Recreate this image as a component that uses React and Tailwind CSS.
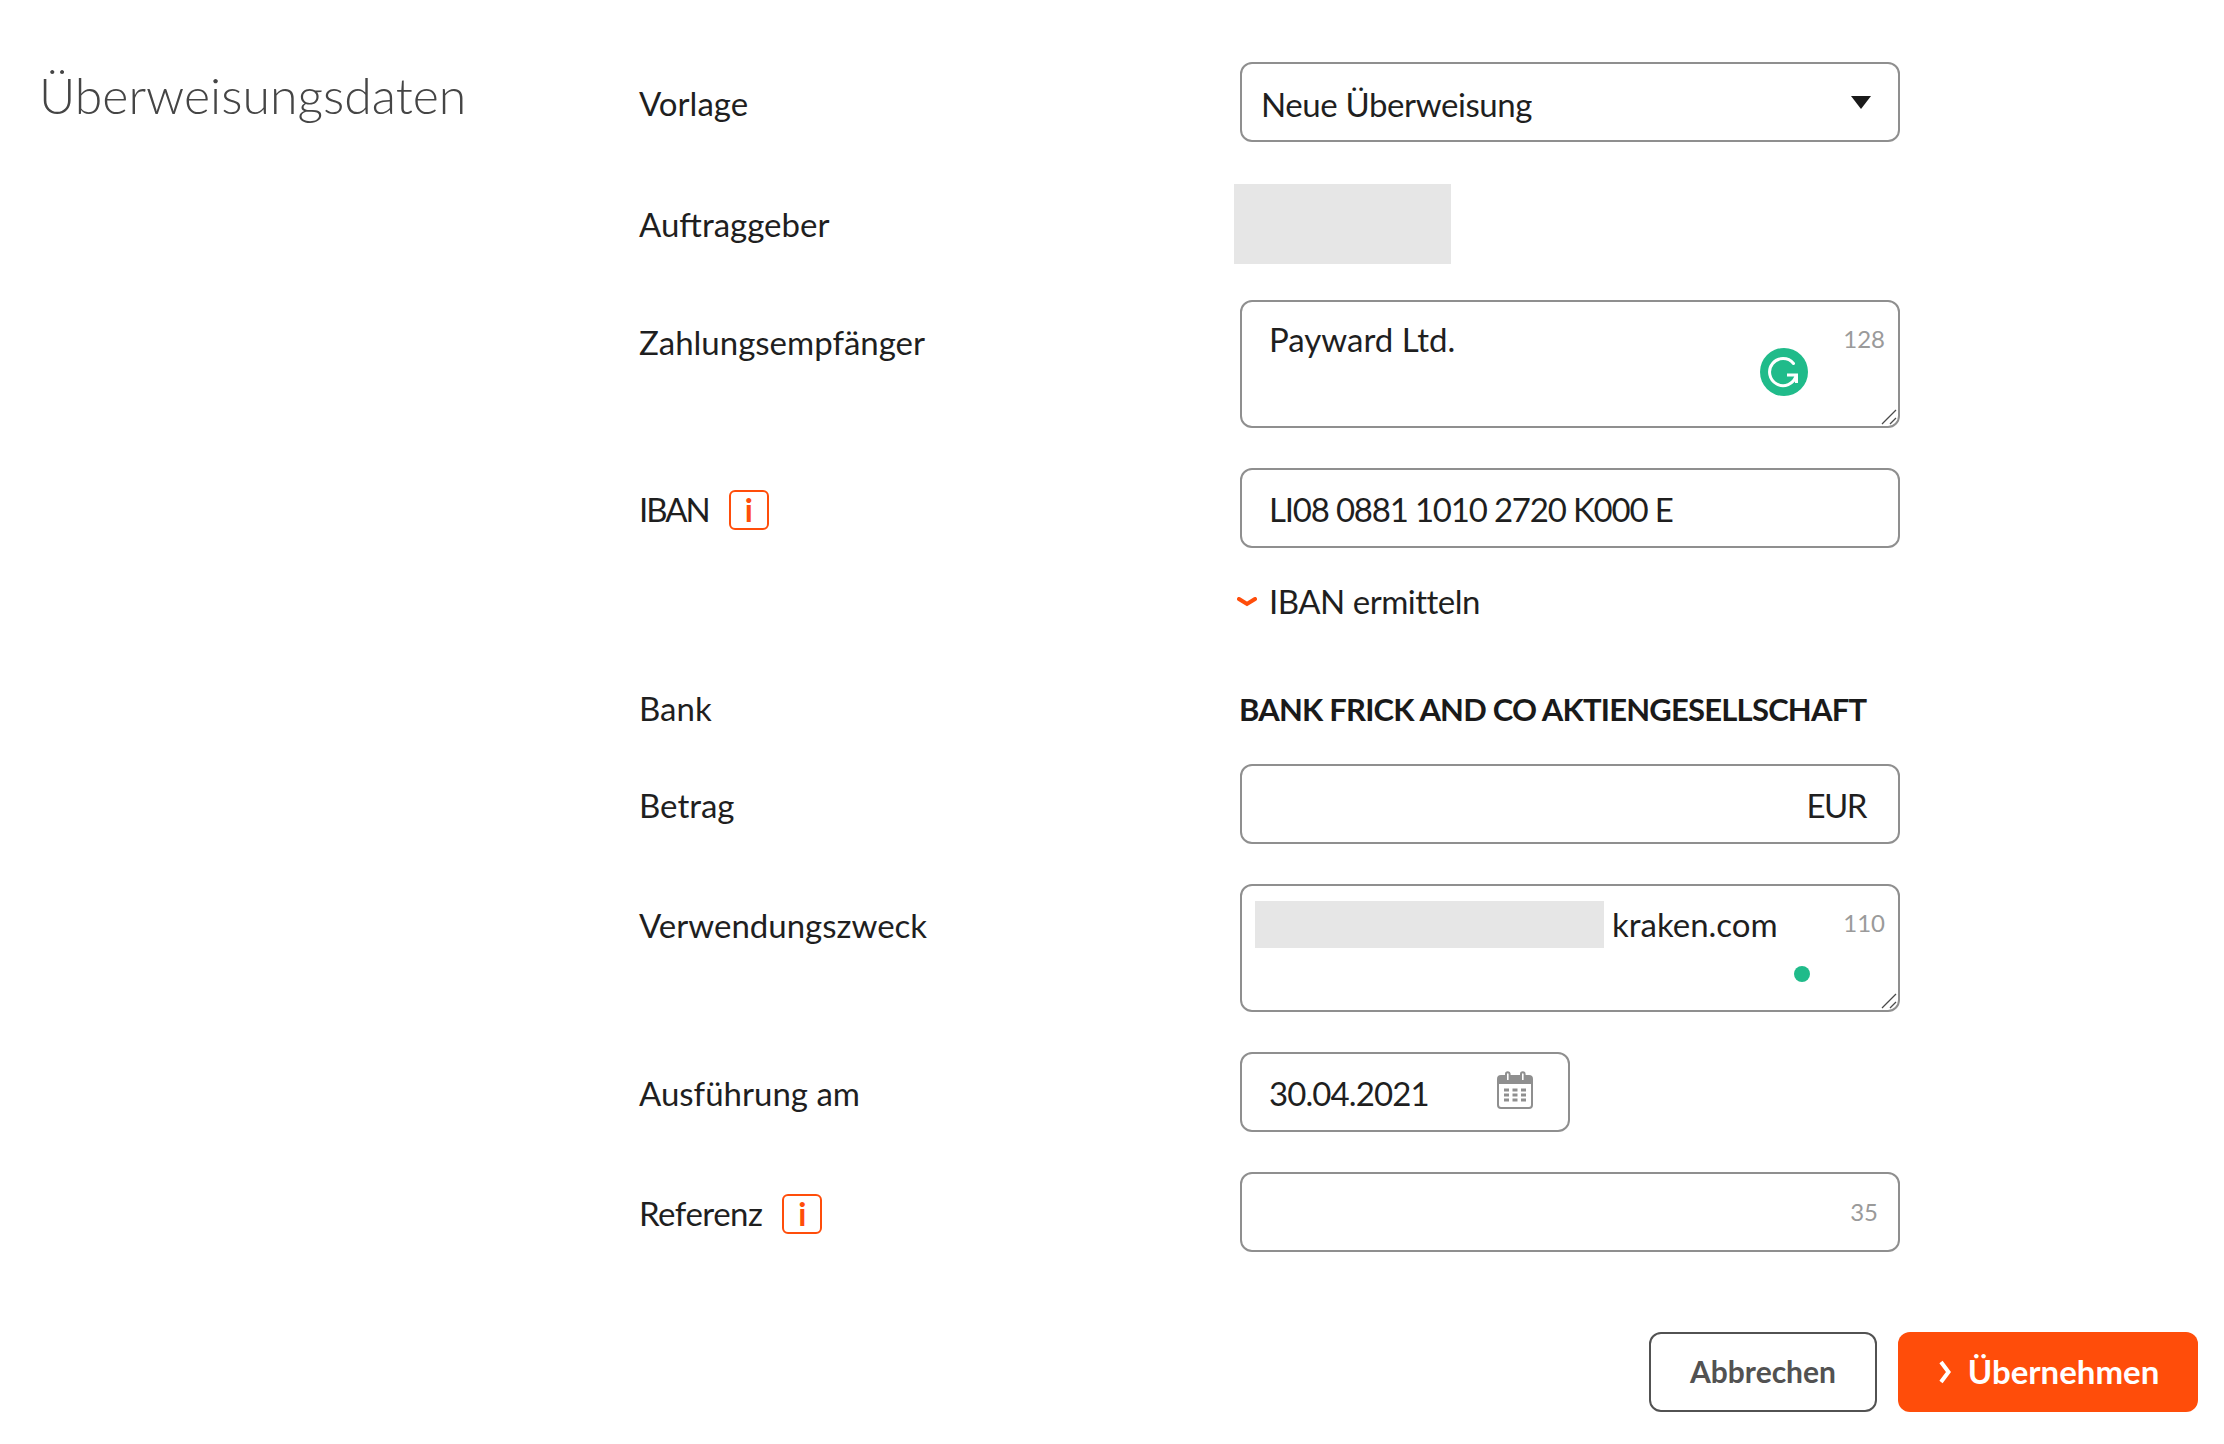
import React from "react";

const box = "border-2 border-[#8f8f8f] rounded-[12px] bg-white w-[660px]";

function Label({ children, info, top = "pt-[3px]", ink = "" }) {
  return (
    <div className={"w-[601px] shrink-0 h-[80px] flex items-center text-[33px] text-[#1f1f1f] " + top}>
      <span className={ink}>{children}</span>
      {info && (
        <span className="ml-[20px] w-[40px] h-[40px] border-2 border-[#ff4d0a] rounded-[6px] flex items-center justify-center text-[#ff4d0a] text-[32px] font-bold leading-none">
          i
        </span>
      )}
    </div>
  );
}

function Handle() {
  return (
    <svg className="absolute right-[1px] bottom-[1px]" width="16" height="16" viewBox="0 0 16 16" fill="none" stroke="#4a4a4a" strokeWidth="1.3">
      <path d="M1 15L15 1M9 15L15 9" />
    </svg>
  );
}

function Count({ children, className }) {
  return <span className={"absolute text-[24px] text-[#9a9a9a] leading-none " + className}>{children}</span>;
}

export default function App() {
  return (
    <div
      className="w-[2224px] h-[1444px] bg-white overflow-hidden pt-[62px] text-[#1f1f1f]"
      style={{ fontFamily: "Lato, 'Noto Sans', sans-serif" }}
    >
      <div className="flex pl-[40px]">
        <h1 className="w-[600px] -ml-[1px] -mt-[2px] shrink-0 h-[70px] text-[50px] font-light text-[#454545] leading-[70px]">
          Überweisungsdaten
        </h1>
        <div className="flex flex-col">
          <div className="flex">
            <Label top="pt-[4px]">Vorlage</Label>
            <div className={box + " h-[80px] flex items-center justify-between pl-[19px] pr-[27px] text-[33px]"}>
              <span className="h-[45px] overflow-hidden leading-[48px] tracking-[-0.4px]">Neue Überweisung</span>
              <svg width="20" height="13" viewBox="0 0 20 13">
                <path d="M0 0H20L10 13Z" fill="#1a1a1a" />
              </svg>
            </div>
          </div>

          <div className="flex mt-[42px]">
            <Label top="pt-[2px]">Auftraggeber</Label>
            <div className="-ml-[6px] w-[217px] h-[80px] bg-[#e6e6e6]" />
          </div>

          <div className="flex mt-[36px]">
            <Label top="pt-[5px]">Zahlungsempfänger</Label>
            <div className={box + " h-[128px] relative pl-[27px] pt-[14px] text-[33px] leading-[46px]"}>
              Payward Ltd.
              <Count className="right-[13px] top-[25px]">128</Count>
              <svg className="absolute left-[518px] top-[46px]" width="48" height="48" viewBox="0 0 48 48">
                <circle cx="24" cy="24" r="24" fill="#20bb8a" />
                <path d="M33.5 15.5A13.5 13.5 0 1 0 36 28" fill="none" stroke="#fff" strokeWidth="3" strokeLinecap="round" />
                <path d="M27 27H36.5V35" fill="none" stroke="#fff" strokeWidth="3" />
              </svg>
              <Handle />
            </div>
          </div>

          <div className="flex mt-[40px]">
            <Label info ink="tracking-[-2px]">IBAN</Label>
            <div className={box + " h-[80px] flex items-center pl-[27px] pt-[3px] text-[33px] tracking-[-1.2px]"}>LI08 0881 1010 2720 K000 E</div>
          </div>

          <div className="flex mt-[34px] h-[40px]">
            <div className="w-[601px] shrink-0" />
            <div className="flex items-center text-[33px] tracking-[-0.5px]">
              <svg width="20" height="10" viewBox="0 0 20 10" className="-ml-[3px] mr-[12px]">
                <path d="M2 2L10 7L18 2" fill="none" stroke="#ff4d0a" strokeWidth="4" strokeLinecap="round" />
              </svg>
              IBAN ermitteln
            </div>
          </div>

          <div className="flex mt-[67px] h-[40px] items-center text-[33px]">
            <div className="w-[601px] shrink-0">Bank</div>
            <div className="-ml-[1px] font-bold whitespace-nowrap text-[31px] tracking-[-0.8px] text-[#1a1a1a]">BANK FRICK AND CO AKTIENGESELLSCHAFT</div>
          </div>

          <div className="flex mt-[35px]">
            <Label>Betrag</Label>
            <div className={box + " h-[80px] flex items-center justify-end pr-[32px] pt-[3px] text-[33px] tracking-[-1.5px]"}>EUR</div>
          </div>

          <div className="flex mt-[40px]">
            <Label>Verwendungszweck</Label>
            <div className={box + " h-[128px] relative pl-[13px] pt-[14px]"}>
              <div className="flex items-center text-[33px]">
                <div className="w-[349px] h-[47px] bg-[#e6e6e6] mr-[8px]" />
                <span>kraken.com</span>
              </div>
              <Count className="right-[13px] top-[25px]">110</Count>
              <div className="absolute left-[552px] top-[80px] w-[16px] h-[16px] rounded-full bg-[#20bb8a]" />
              <Handle />
            </div>
          </div>

          <div className="flex mt-[40px]">
            <Label>Ausführung am</Label>
            <div className="w-[330px] h-[80px] border-2 border-[#8f8f8f] rounded-[12px] flex items-center justify-between pl-[27px] pr-[35px] text-[33px]">
              <span className="tracking-[-0.9px] pt-[3px]">30.04.2021</span>
              <svg width="36" height="38" viewBox="0 0 36 38" fill="none" className="-mt-[4px]">
                <rect x="1" y="5" width="34" height="32" rx="3" stroke="#8f8f8f" strokeWidth="2" fill="#fff" />
                <path d="M1 8a3 3 0 0 1 3-3h28a3 3 0 0 1 3 3v5H1Z" fill="#8f8f8f" />
                <path d="M9 9V3a1.8 1.8 0 0 1 3.6 0V9M24 9V3a1.8 1.8 0 0 1 3.6 0V9" stroke="#8f8f8f" strokeWidth="2" fill="#fff" />
                <path d="M7 19h5M15.5 19h5M24 19h5M7 24h5M15.5 24h5M24 24h5M7 29h5M15.5 29h5M24 29h5" stroke="#8f8f8f" strokeWidth="3" />
              </svg>
            </div>
          </div>

          <div className="flex mt-[40px]">
            <Label info ink="tracking-[-0.5px]">Referenz</Label>
            <div className={box + " h-[80px] relative"}>
              <Count className="right-[20px] top-[26px]">35</Count>
            </div>
          </div>
        </div>
      </div>

      <div className="flex justify-end gap-[21px] pr-[26px] mt-[80px]">
        <div className="w-[228px] h-[80px] border-2 border-[#525252] rounded-[12px] flex items-center justify-center pb-[2px] text-[30px] font-bold text-[#525252]">
          Abbrechen
        </div>
        <div className="w-[300px] h-[80px] rounded-[12px] bg-[#ff4d0a] flex items-center justify-center gap-[17px] pl-[2px] text-[33px] font-bold text-white">
          <svg width="12" height="24" viewBox="0 0 12 24">
            <path d="M2 2L9.5 12L2 22" fill="none" stroke="#fff" strokeWidth="4" />
          </svg>
          Übernehmen
        </div>
      </div>
    </div>
  );
}
